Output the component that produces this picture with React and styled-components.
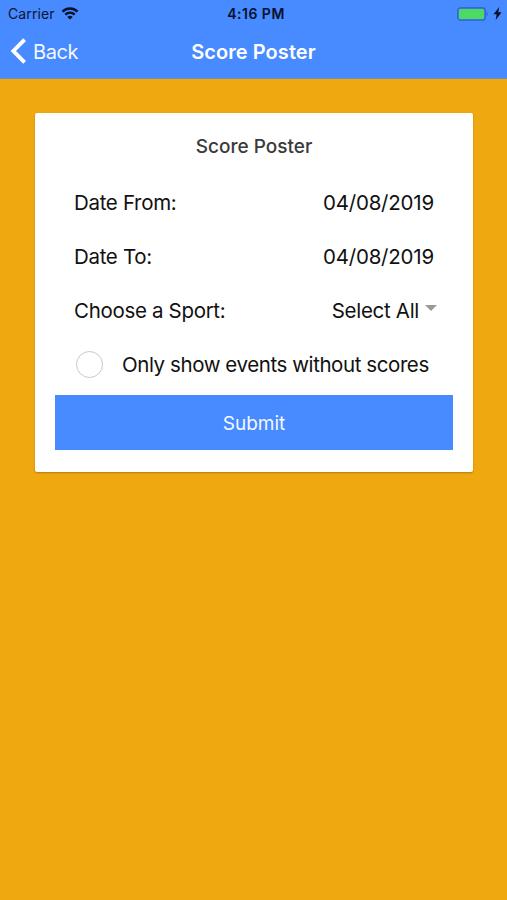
import { useState } from "react";
import styled, { createGlobalStyle } from "styled-components";

const GlobalStyle = createGlobalStyle`
    * {
        box-sizing: border-box;
    }
    body {
        margin: 0;
        background: #efa80f;
        font-family: Inter, "Liberation Sans", sans-serif;
    }
`
const Page = styled.div`
    min-height: 900px;
    background: #efa80f;
`
const Header = styled.header`
    height: 79px;
    background: #488aff;
    border-bottom: 1px solid #6d8fc8;
`
const StatusBar = styled.div`
    display: grid;
    grid-template-columns: 1fr auto 1fr;
    align-items: center;
    height: 27px;
    padding: 0 5px 0 8px;
    color: #0a1633;
    font-size: 14px;
`
const StatusGroup = styled.div`
    display: flex;
    align-items: center;
    justify-content: ${({ $end }) => ($end ? "flex-end" : "flex-start")};
    gap: ${({ $end }) => ($end ? "4px" : "6px")};
    letter-spacing: 0.1px;
`
const Clock = styled.span`
    padding-left: 2px;
    font-weight: 600;
    font-size: 14px;
    letter-spacing: 0.5px;
    color: #06112b;
`
const NavBar = styled.nav`
    display: grid;
    grid-template-columns: 1fr auto 1fr;
    align-items: center;
    height: 50px;
    padding: 0 10px;
    color: #fff;
`
const BackButton = styled.button`
    display: flex;
    align-items: center;
    gap: 6px;
    padding: 0;
    border: 0;
    background: none;
    color: #f4f8ff;
    font-family: inherit;
    font-size: 20px;
    letter-spacing: -0.4px;
`
const NavTitle = styled.h1`
    margin: 0;
    font-size: 20px;
    font-weight: 600;
    letter-spacing: 0.05px;
`
const Card = styled.main`
    width: 438px;
    height: 359px;
    margin: 34px 0 0 35px;
    padding: 0 20px;
    border-radius: 2px;
    background: #fff;
    box-shadow: 0 1px 2px rgba(0, 0, 0, 0.25);
`
const CardTitle = styled.h2`
    margin: 0;
    height: 62px;
    line-height: 67px;
    text-align: center;
    color: #3a3a3a;
    font-size: 19px;
    font-weight: 500;
    letter-spacing: 0;
`
const Row = styled.label`
    display: flex;
    align-items: center;
    justify-content: ${({ $start }) => ($start ? "flex-start" : "space-between")};
    height: 54px;
    padding: 0 19px;
    color: #111;
    font-size: 20.5px;
`
const Label = styled.span`
    letter-spacing: ${({ $spacing }) => $spacing || "-0.32px"};
`
const Value = styled.span`
    display: flex;
    align-items: center;
    gap: 6px;
    margin-right: ${({ $shift }) => $shift || "0"};
    letter-spacing: ${({ $spacing }) => $spacing || "-0.2px"};
`
const Arrow = styled.span`
    margin-top: -4px;
    border-top: 6px solid #999;
    border-left: 6px solid transparent;
    border-right: 6px solid transparent;
`
const Check = styled.input`
    appearance: none;
    width: 27px;
    height: 27px;
    margin: 0 19px 0 2px;
    border: 1px solid #c8c8c8;
    border-radius: 50%;
    background: #fff;

    &:checked {
        background: #488aff;
    }
`
const Submit = styled.button`
    display: block;
    width: 398px;
    height: 55px;
    margin-top: 4px;
    padding: 1px 0 0;
    border: 0;
    background: #488aff;
    color: #f4f8ff;
    font-family: inherit;
    font-size: 19px;
    letter-spacing: 0;
`

const Wifi = () => (
    <svg width="18" height="13" viewBox="0 0 18 13" fill="none" stroke="#06112b" strokeWidth="2.4">
        <path d="M1.5 4.6C5.8 0.5 12.2 0.5 16.5 4.6" />
        <path d="M4.3 7.6C7 5.1 11 5.1 13.7 7.6" />
        <path d="M9 12.6L6.3 9.9C7.8 8.5 10.2 8.5 11.7 9.9Z" fill="#06112b" stroke="none" />
    </svg>
)

const Battery = () => (
    <svg width="32" height="14" viewBox="0 0 32 14">
        <rect x="0.8" y="0.8" width="27.4" height="12.4" rx="2.6" fill="none" stroke="#2f61bd" strokeWidth="1.2" />
        <rect x="2" y="2" width="25" height="10" rx="1.2" fill="#4cd964" />
        <path d="M29.6 5v4c1.6-.5 1.6-3.5 0-4z" fill="#2f61bd" />
    </svg>
)

const Bolt = () => (
    <svg width="9" height="13" viewBox="0 0 8 12">
        <path d="M5.6 0L0.3 6.8H3.2L2.3 12L7.8 4.9H4.7Z" fill="#06112b" />
    </svg>
)

const Chevron = () => (
    <svg width="17" height="28" viewBox="0 0 17 28" fill="none" stroke="#fff" strokeWidth="3.9">
        <path d="M14.6 1.7L3.4 13L14.6 24.3" />
    </svg>
)

const dates = [
    { label: "Date From:", value: "04/08/2019" },
    { label: "Date To:", value: "04/08/2019" },
];

const App = () => {
    const [onlyMissing, setOnlyMissing] = useState(false);

    return (
        <Page>
            <GlobalStyle />
            <Header>
                <StatusBar>
                    <StatusGroup>
                        <span>Carrier</span>
                        <Wifi />
                    </StatusGroup>
                    <Clock>4:16 PM</Clock>
                    <StatusGroup $end>
                        <Battery />
                        <Bolt />
                    </StatusGroup>
                </StatusBar>
                <NavBar>
                    <BackButton>
                        <Chevron />
                        <span>Back</span>
                    </BackButton>
                    <NavTitle>Score Poster</NavTitle>
                </NavBar>
            </Header>
            <Card>
                <CardTitle>Score Poster</CardTitle>
                {dates.map(({ label, value }) => (
                    <Row key={label}>
                        <Label>{label}</Label>
                        <Value>{value}</Value>
                    </Row>
                ))}
                <Row>
                    <Label>Choose a Sport:</Label>
                    <Value $shift="-3px" $spacing="-0.3px">
                        Select All
                        <Arrow />
                    </Value>
                </Row>
                <Row $start>
                    <Check
                        type="checkbox"
                        checked={onlyMissing}
                        onChange={(e) => setOnlyMissing(e.target.checked)}
                    />
                    <Label $spacing="-0.42px">Only show events without scores</Label>
                </Row>
                <Submit>Submit</Submit>
            </Card>
        </Page>
    )
}

export default App;
